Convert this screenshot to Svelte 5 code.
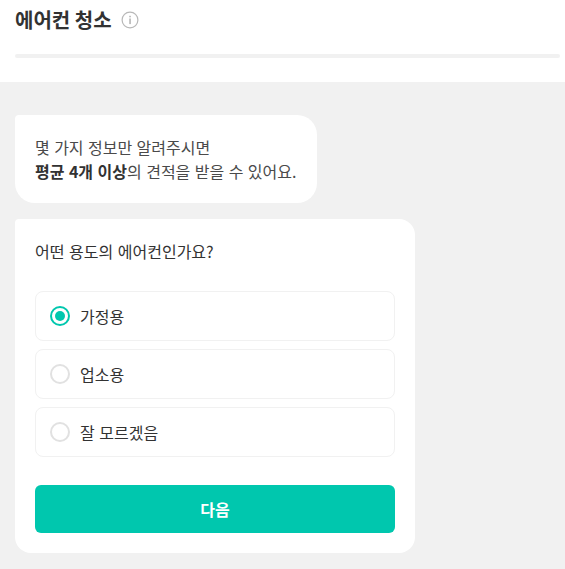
<script>
    let selected = 'home';
    const options = [
        { id: 'home', label: '가정용' },
        { id: 'office', label: '업소용' },
        { id: 'unknown', label: '잘 모르겠음' }
    ];
</script>

<div class="page">
    <header>
        <div class="title">
            <h1>에어컨 청소</h1>
            <svg class="info" width="18" height="18" viewBox="0 0 18 18" fill="none">
                <circle cx="9" cy="9" r="7.9" stroke="#b8b8b8" stroke-width="1.2" />
                <rect x="8.4" y="4.8" width="1.3" height="1.5" fill="#a5a5a5" />
                <rect x="8.4" y="7.5" width="1.3" height="5.6" fill="#a5a5a5" />
            </svg>
        </div>
        <div class="progress"></div>
    </header>

    <main>
        <div class="bubble">
            <p>몇 가지 정보만 알려주시면</p>
            <p><strong>평균 4개 이상</strong>의 견적을 받을 수 있어요.</p>
        </div>

        <div class="card">
            <div class="question">어떤 용도의 에어컨인가요?</div>
            <div class="options">
                {#each options as option}
                    <label class="option">
                        <input type="radio" name="usage" value={option.id} bind:group={selected} />
                        <span class="radio" class:on={selected === option.id}></span>
                        <span>{option.label}</span>
                    </label>
                {/each}
            </div>
            <button type="button">다음</button>
        </div>
    </main>
</div>

<style>
    :global(body) {
        margin: 0;
        background: #f1f1f1;
    }

    .page {
        font-family: "Noto Sans CJK KR", "Noto Sans", sans-serif;
        color: #323232;
        height: 569px;
        overflow: hidden;
        background: #f1f1f1;
    }

    header {
        background: white;
        height: 82px;
        padding: 0 5px 0 15px;
        box-sizing: border-box;
    }

    .title {
        display: flex;
        align-items: center;
        gap: 9px;
        height: 40px;
    }

    h1 {
        margin: 0;
        font-size: 20px;
        font-weight: 700;
        line-height: 40px;
    }

    .progress {
        height: 4px;
        margin-top: 14px;
        background: #f1f1f1;
        border-radius: 2px;
    }

    main {
        padding: 33px 0 0 15px;
        display: flex;
        flex-direction: column;
        align-items: flex-start;
        gap: 16px;
    }

    .bubble {
        background: white;
        border-radius: 4px 20px 20px 20px;
        padding: 20px 21px 20px 20px;
        font-size: 16px;
        line-height: 24px;
        word-spacing: 0.85px;
        color: #4a4a4a;
    }

    .bubble p {
        margin: 0;
    }

    .bubble strong {
        color: #323232;
    }

    .card {
        background: white;
        width: 400px;
        box-sizing: border-box;
        border-radius: 4px 16px 16px 16px;
        padding: 20px;
    }

    .question {
        font-size: 16px;
        line-height: 24px;
        margin-bottom: 28px;
        word-spacing: 1px;
    }

    .options {
        display: flex;
        flex-direction: column;
        gap: 8px;
        margin-bottom: 28px;
    }

    .option {
        display: flex;
        align-items: center;
        gap: 10px;
        height: 50px;
        box-sizing: border-box;
        padding: 0 14px;
        border: 1px solid #f1f1f1;
        border-radius: 8px;
        font-size: 16px;
        word-spacing: 1px;
    }

    .option input {
        display: none;
    }

    .radio {
        width: 20px;
        height: 20px;
        box-sizing: border-box;
        border: 2px solid #e1e1e1;
        border-radius: 50%;
        display: flex;
        align-items: center;
        justify-content: center;
    }

    .radio.on {
        border-color: #00c7ae;
    }

    .radio.on::after {
        content: "";
        width: 10px;
        height: 10px;
        border-radius: 50%;
        background: #00c7ae;
    }

    button {
        display: block;
        width: 100%;
        height: 48px;
        border: none;
        border-radius: 6px;
        background: #00c7ae;
        color: white;
        font-family: inherit;
        font-size: 16px;
        font-weight: 700;
    }
</style>
